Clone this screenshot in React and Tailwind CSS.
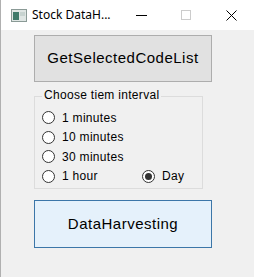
import React from "react";

function Radio({ label, checked }) {
  return (
    <div className="flex items-center h-[19.5px]">
      <div className="w-[13px] h-[13px] rounded-full border border-[#333] bg-white flex items-center justify-center shrink-0">
        {checked && <div className="w-[7px] h-[7px] rounded-full bg-[#333]" />}
      </div>
      <span className="ml-[7px] text-[12px] text-black leading-none tracking-[0.3px]">{label}</span>
    </div>
  );
}

export default function App() {
  return (
    <div className="w-[254px] h-[277px] bg-[#f0f0f0] flex flex-col border-l border-[#b0b0b0]" style={{ fontFamily: '"Liberation Sans", Arial, sans-serif' }}>
      <div className="h-[30px] bg-white flex items-center shrink-0">
        <svg className="ml-[10px] shrink-0" width="16" height="13" viewBox="0 0 16 13">
          <rect x="0.5" y="0.5" width="15" height="12" fill="#dfe6e4" stroke="#8a9a96" />
          <rect x="2" y="3" width="6" height="8" fill="#3f7a6a" />
          <rect x="9" y="3" width="5" height="4" fill="#c7d3d0" />
        </svg>
        <span className="ml-[5px] w-[104px] text-[12px] text-black" style={{ fontFamily: '"Noto Sans", sans-serif' }}>Stock DataH...</span>
        <div className="w-[11px] h-px bg-black shrink-0" />
        <div className="ml-[34px] w-[10px] h-[10px] border border-[#cccccc] shrink-0" />
        <svg className="ml-[35px] shrink-0" width="11" height="11" viewBox="0 0 11 11">
          <path d="M0.5 0.5 L10.5 10.5 M10.5 0.5 L0.5 10.5" stroke="#000" strokeWidth="1" />
        </svg>
      </div>
      <div className="pl-[33px] pt-[5px] flex flex-col w-[212px]">
        <div className="h-[47px] w-[178px] bg-[#e1e1e1] border border-[#adadad] flex items-center justify-center text-[15px] text-black tracking-[0.5px]">
          GetSelectedCodeList
        </div>
        <div className="relative mt-[14px] w-[169px] h-[93px] border border-[#dcdcdc] pl-[7px] pt-[11px]">
          <span className="absolute left-[7px] top-[-8px] px-[2px] bg-[#f0f0f0] text-[12px] text-black leading-none tracking-[0.3px]">Choose tiem interval</span>
          <Radio label="1 minutes" />
          <Radio label="10 minutes" />
          <Radio label="30 minutes" />
          <div className="flex">
            <div className="w-[100px]"><Radio label="1 hour" /></div>
            <Radio label="Day" checked />
          </div>
        </div>
        <div className="mt-[11px] h-[48px] w-[178px] bg-[#e5f1fb] border border-[#3c76a8] flex items-center justify-center text-[15px] text-black tracking-[0.5px]">
          DataHarvesting
        </div>
      </div>
    </div>
  );
}
